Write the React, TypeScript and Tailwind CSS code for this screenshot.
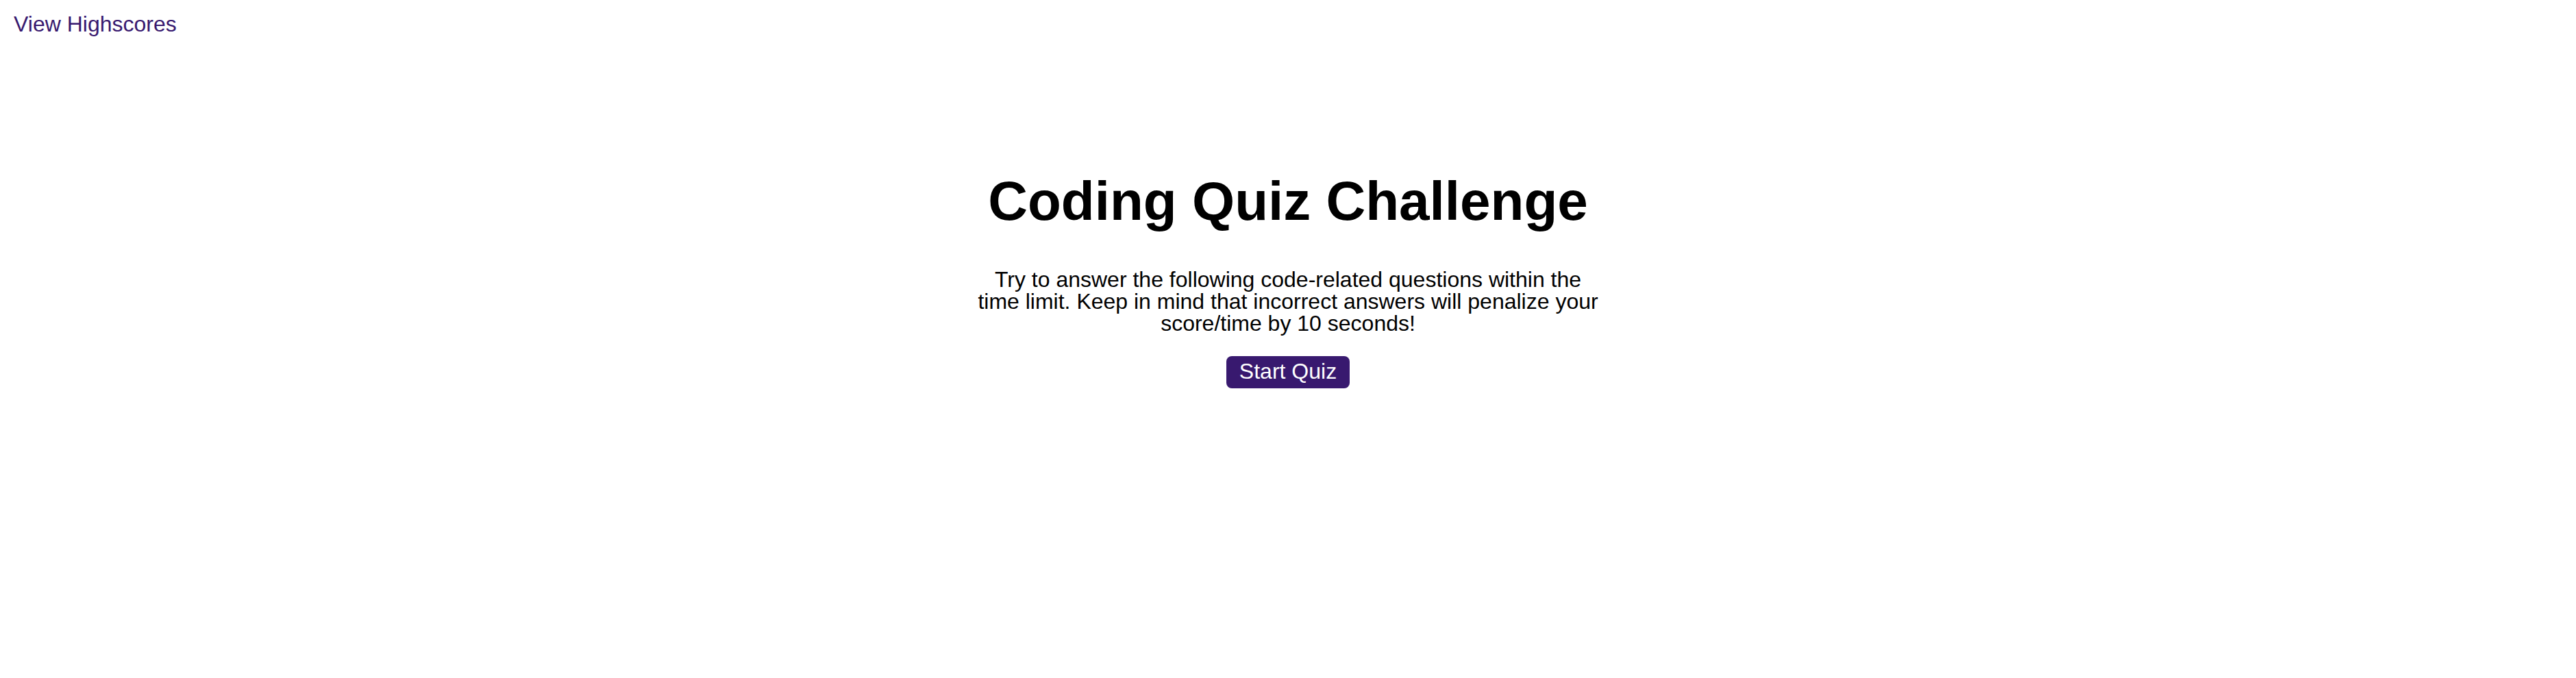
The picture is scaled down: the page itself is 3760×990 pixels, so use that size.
export default function App() {
  return (
    <div className="min-h-screen bg-white text-black font-['Liberation_Sans',Arial,sans-serif]">
      <header className="pt-[19px] pl-[20px]">
        <a href="#" className="text-[32px] leading-[32px] text-[#38196f]">
          View Highscores
        </a>
      </header>

      <main className="flex flex-col items-center pt-[201px]">
        <h1 className="text-[80px] leading-[80px] font-bold">Coding Quiz Challenge</h1>
        <p className="mt-[58px] w-[912px] text-center text-[32px] leading-[32px]">
          Try to answer the following code-related questions within the time limit. Keep in mind
          that incorrect answers will penalize your score/time by 10 seconds!
        </p>
        <button className="mt-[32px] h-[47px] px-[19px] pt-[6px] pb-[9px] rounded-[8px] bg-[#38196f] text-white text-[32px] leading-[32px]">
          Start Quiz
        </button>
      </main>
    </div>
  );
}
